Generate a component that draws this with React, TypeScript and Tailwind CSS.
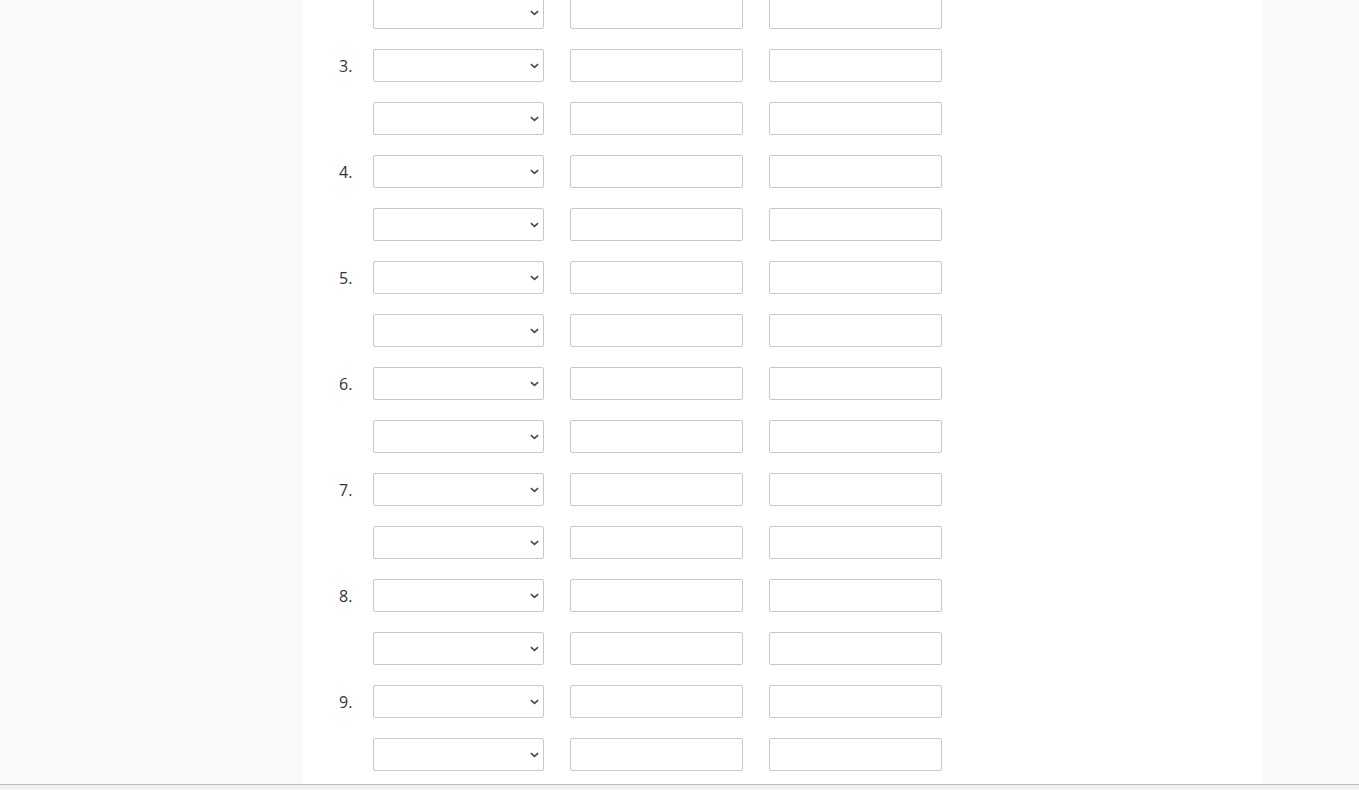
import React from 'react'

const rows: (string | null)[] = [null]
for (let n = 3; n <= 9; n++) {
  rows.push(`${n}.`)
  rows.push(null)
}

function Chevron() {
  return (
    <svg viewBox="0 0 10 6" className="w-[9px] h-[6px]">
      <path d="M1 1l4 3.5L9 1" fill="none" stroke="#4a4a4a" strokeWidth="1.8" />
    </svg>
  )
}

function Row({ label }: { label: string | null }) {
  return (
    <div className="flex items-center h-[33px] mb-[20px]">
      <div className="w-[71px] pl-[37px] text-[16px] text-[#333] font-['Open_Sans',sans-serif]">
        {label}
      </div>
      <div className="w-[171px] h-[33px] border border-[#c8c8c8] rounded-[2px] bg-white flex items-center justify-end pr-[4px]">
        <Chevron />
      </div>
      <input className="ml-[26px] w-[173px] h-[33px] border border-[#c8c8c8] rounded-[2px] bg-white outline-none" />
      <input className="ml-[26px] w-[173px] h-[33px] border border-[#c8c8c8] rounded-[2px] bg-white outline-none" />
    </div>
  )
}

export default function App() {
  return (
    <div className="h-[790px] w-full flex flex-col overflow-hidden bg-[#f9f9f9]">
      <div className="flex-1 min-h-0 flex overflow-hidden">
        <div className="ml-[302px] w-[960px] bg-white">
          <div className="-mt-[4px]">
            {rows.map((label, i) => (
              <Row key={i} label={label} />
            ))}
          </div>
        </div>
      </div>
      <div className="h-[6px] border-t border-[#bdbdbd] bg-[#efefef]" />
    </div>
  )
}
